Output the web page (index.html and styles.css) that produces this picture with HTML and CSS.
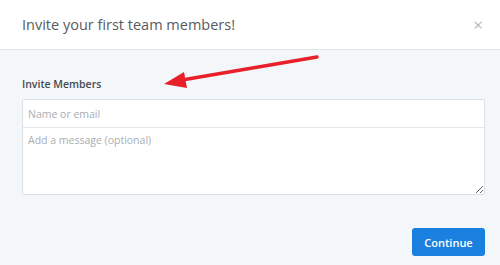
FILE: index.html
```html
<!DOCTYPE html>
<html lang="en">
<head>
  <meta charset="UTF-8">
  <title>Invite</title>
  <link rel="stylesheet" href="styles.css">
</head>
<body>
  <div class="modal">
    <!-- header -->
    <div class="modalHeader">
      <h1 class="modalTitle">Invite your first team members!</h1>
      <span class="closeBtn">&times;</span>
    </div>

    <!-- body -->
    <div class="modalBody">
      <label class="fieldLabel" for="inviteInput">Invite Members</label>
      <div class="inviteBox">
        <input class="inviteInput" id="inviteInput" type="text" placeholder="Name or email">
        <textarea class="inviteMsg" placeholder="Add a message (optional)"></textarea>
      </div>
      <div class="modalFooter">
        <button class="continueBtn" type="button">Continue</button>
      </div>
    </div>

    <!-- annotation arrow -->
    <svg class="arrow" width="500" height="265" viewBox="0 0 500 265">
      <line x1="317" y1="57" x2="182" y2="80" stroke="#e8202a" stroke-width="3.5" stroke-linecap="round" />
      <polygon points="164,84 184,72 187,88" fill="#e8202a" />
    </svg>
  </div>
</body>
</html>
```

FILE: styles.css
```css
body {
  margin: 0;
  font-family: "Open Sans", "Liberation Sans", sans-serif;
  background-color: #f4f7fa;
}

.modal {
  position: relative;
  width: 500px;
  height: 265px;
  overflow: hidden;
}

.modalHeader {
  height: 49px;
  background-color: #fff;
  border-bottom: 1px solid #dfe4e8;
  display: flex;
  align-items: center;
  justify-content: space-between;
  padding: 0 15px 0 22px;
}

.modalTitle {
  margin: 0;
  font-size: 14.5px;
  font-weight: 400;
  color: #575b61;
}

.closeBtn {
  color: #b3bac2;
  font-size: 17px;
  line-height: 1;
  margin-right: 2px;
}

.modalBody {
  padding: 27px 15px 0 22px;
}

.fieldLabel {
  display: block;
  font-size: 10.5px;
  font-weight: 600;
  color: #454a50;
  line-height: 14px;
  margin-bottom: 8px;
}

.inviteBox {
  border: 1px solid #dcdfe2;
  background-color: #fff;
  border-radius: 2px;
}

.inviteInput {
  display: block;
  box-sizing: border-box;
  width: 100%;
  height: 28px;
  border: none;
  border-bottom: 1px solid #e6e9ec;
  padding: 0 5px;
  font-family: inherit;
  font-size: 10.5px;
  outline: none;
}

.inviteMsg {
  display: block;
  box-sizing: border-box;
  width: 100%;
  height: 66px;
  border: none;
  padding: 5px 5px;
  font-family: inherit;
  font-size: 10.5px;
  resize: vertical;
  outline: none;
}

.inviteInput::placeholder,
.inviteMsg::placeholder {
  color: #a9adb2;
}

.modalFooter {
  display: flex;
  justify-content: flex-end;
  margin-top: 33px;
}

.continueBtn {
  width: 73px;
  height: 28px;
  border: none;
  border-radius: 3px;
  background-color: #1a80e0;
  color: #fff;
  font-family: inherit;
  font-size: 11px;
  font-weight: 600;
}

.arrow {
  position: absolute;
  top: 0;
  left: 0;
  pointer-events: none;
}
```
